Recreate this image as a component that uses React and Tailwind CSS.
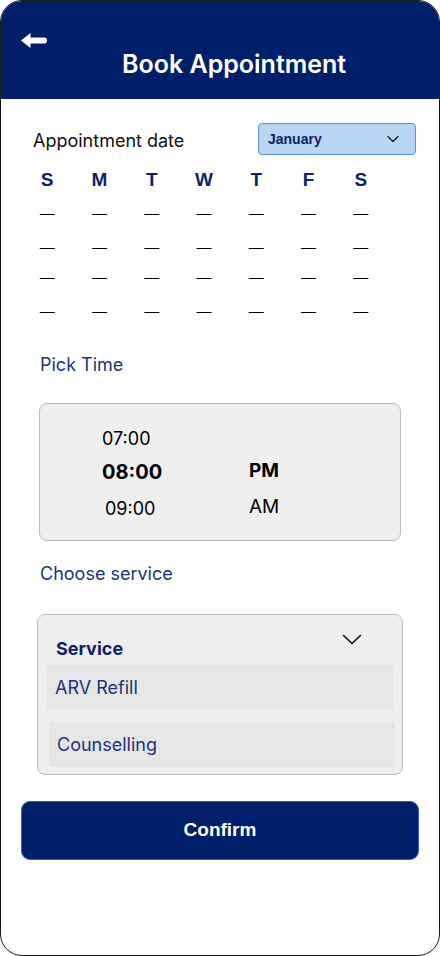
import { ChevronDown } from 'lucide-react'

const days = ['S', 'M', 'T', 'W', 'T', 'F', 'S']
const dashRows = ['h-[34px]', 'h-[30px]', 'h-[34px]', 'h-[34px]']

export default function App() {
  return (
    <div className="w-[440px] h-[956px] bg-white font-['Inter',sans-serif]">
      <div className="w-full h-full border border-[#1a1a1a] rounded-[22px] overflow-hidden flex flex-col">
        <header className="h-[98px] bg-[#001f6b] relative shrink-0">
          <svg className="absolute left-[19px] top-[31px]" width="28" height="18" viewBox="0 0 28 18">
            <path d="M1 8.5 L10.5 1 L10.5 5.5 L24.5 5.5 Q27 5.5 27 8.5 Q27 11.5 24.5 11.5 L10.5 11.5 L10.5 16 Z" fill="white" />
          </svg>
          <h1 className="absolute left-[121px] top-[48px] text-white text-[25px] font-semibold leading-[30px]">
            Book Appointment
          </h1>
        </header>

        <div className="flex items-start justify-between pl-[32px] pr-[23px] pt-[24px]">
          <p className="text-[18px] text-[#111] mt-[6px] leading-[24px]">Appointment date</p>
          <div className="w-[158px] h-[32px] bg-[#b7d5f5] border border-[#5c8ede] rounded-[4px] flex items-center justify-between pl-[9px] pr-[12px]">
            <span className="font-['Liberation_Sans',sans-serif] font-bold text-[14px] text-[#0d2266]">January</span>
            <ChevronDown size={20} strokeWidth={1.6} className="text-[#222]" />
          </div>
        </div>

        <div className="pl-[20px] w-[386px] mt-[11px] font-['Liberation_Sans',sans-serif]">
          <div className="grid grid-cols-7 h-[26px] items-center">
            {days.map((d, i) => (
              <span key={i} className="text-center font-bold text-[19px] text-[#0d2266] leading-none">{d}</span>
            ))}
          </div>
          <div className="mt-[13px]">
            {dashRows.map((h, r) => (
              <div key={r} className={`grid grid-cols-7 items-start ${h}`}>
                {days.map((d, i) => (
                  <span key={i} className="text-center text-[15px] leading-none text-black">—</span>
                ))}
              </div>
            ))}
          </div>
        </div>

        <p className="ml-[39px] mt-[16px] text-[18px] leading-[24px] text-[#1a337e]">Pick Time</p>

        <div className="mx-[38px] mt-[26px] h-[138px] bg-[#efefef] border border-[#bdbdbd] rounded-[8px] relative">
          <div className="absolute left-[62px] top-[23px] flex flex-col text-black">
            <span className="text-[18px] leading-[24px]">07:00</span>
            <span className="text-[20px] font-bold leading-[26px] mt-[8px]">08:00</span>
            <span className="text-[18px] leading-[24px] mt-[12px] ml-[3px]">09:00</span>
          </div>
          <div className="absolute left-[209px] top-[54px] flex flex-col text-black">
            <span className="text-[19px] font-bold leading-[26px]">PM</span>
            <span className="text-[19px] leading-[24px] mt-[11px]">AM</span>
          </div>
        </div>

        <p className="ml-[39px] mt-[21px] text-[18px] leading-[24px] text-[#1a337e]">Choose service</p>

        <div className="mx-[36px] mt-[28px] h-[161px] bg-[#efefef] border border-[#bdbdbd] rounded-[8px] flex flex-col pt-[18px] pl-[9px] pr-[9px]">
          <div className="flex items-start justify-between pl-[9px] pr-[31px]">
            <span className="text-[18px] font-bold leading-[26px] text-[#0d2266] mt-[3px]">Service</span>
            <svg width="20" height="12" viewBox="0 0 20 12" className="mt-[1px]">
              <polyline points="1.5,1.5 10,9.5 18.5,1.5" fill="none" stroke="#111" strokeWidth="1.6" strokeLinecap="round" strokeLinejoin="round" />
            </svg>
          </div>
          <div className="mt-[3px] h-[45px] bg-[#e6e6e6] flex items-center pl-[8px] text-[18px] text-[#1a337e]">ARV Refill</div>
          <div className="mt-[12px] ml-[2px] mr-[-2px] h-[45px] bg-[#e6e6e6] flex items-center pl-[8px] text-[18px] text-[#1a337e]">Counselling</div>
        </div>

        <button className="mx-[20px] mt-[26px] h-[59px] bg-[#001f6b] border border-[#3b5fc4] rounded-[9px] text-white font-bold text-[19px] font-['Liberation_Sans',sans-serif]">
          Confirm
        </button>
      </div>
    </div>
  )
}
